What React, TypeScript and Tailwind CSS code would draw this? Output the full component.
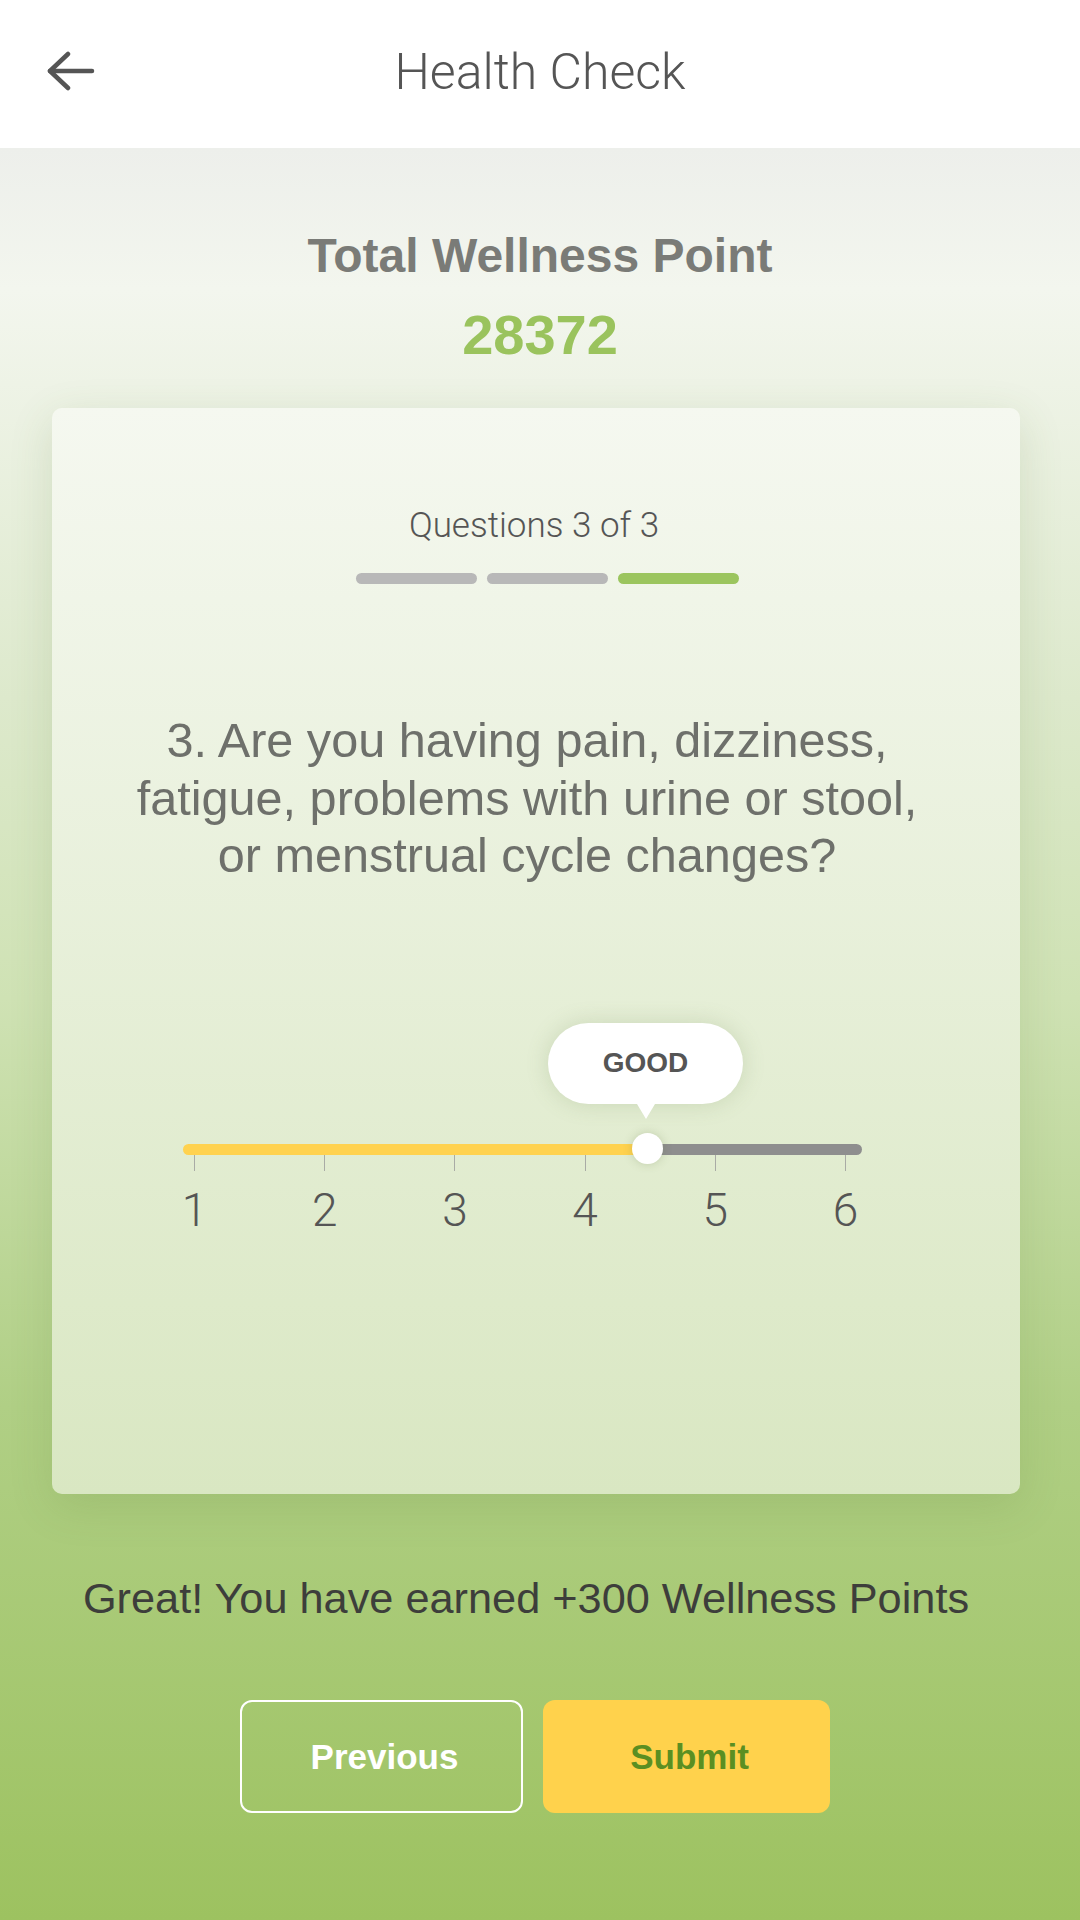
const ticks = [1, 2, 3, 4, 5, 6];

function BackArrow() {
  return (
    <svg width="48" height="40" viewBox="0 0 48 40" fill="none" stroke="#555555" strokeWidth={4.5} strokeLinecap="round" strokeLinejoin="round">
      <path d="M21 3 L3 20 L21 37" />
      <path d="M3 20 H45" />
    </svg>
  );
}

function RatingSlider() {
  return (
    <div className="relative ml-[131px] w-[679px] pt-[121px]">
      {/* tooltip */}
      <div className="absolute left-[365px] top-0 flex h-[81px] w-[195px] items-center justify-center rounded-full bg-white shadow-[0_0_22px_rgba(110,135,80,0.22)]">
        <span className="text-[28px] font-bold leading-none text-[#555555]">GOOD</span>
        <div className="absolute left-1/2 top-full h-0 w-0 -translate-x-1/2 border-l-[9px] border-r-[9px] border-t-[15px] border-l-transparent border-r-transparent border-t-white" />
      </div>

      {/* track */}
      <div className="h-[11px] rounded-full bg-[linear-gradient(to_right,#ffd24f_68.5%,#8e8e8e_68.5%)]" />
      <div className="absolute left-[449px] top-[110px] h-[31px] w-[31px] rounded-full bg-white shadow-[0_0_10px_rgba(90,110,60,0.25)]" />

      {/* ticks + labels */}
      <div className="flex justify-between pl-[11px] pr-[16px]">
        {ticks.map((n) => (
          <div key={n} className="flex w-px flex-col items-center">
            <div className="h-[16px] w-px bg-[#a9aba5]" />
            <span className="mt-[16px] font-['Roboto',sans-serif] text-[46px] font-light leading-none text-[#555555]">
              {n}
            </span>
          </div>
        ))}
      </div>
    </div>
  );
}

export default function App() {
  return (
    <div className="flex h-[1920px] w-[1080px] flex-col font-['Liberation_Sans',Arial,sans-serif]">
      {/* Header */}
      <header className="grid h-[148px] grid-cols-[140px_1fr_140px] bg-white pt-[47px]">
        <div className="pl-[47px] pt-[4px]">
          <BackArrow />
        </div>
        <h1 className="text-center font-['Roboto',sans-serif] text-[50px] font-light leading-none text-[#555555]">
          Health Check
        </h1>
        <div />
      </header>

      {/* Body */}
      <main className="flex flex-1 flex-col bg-[linear-gradient(to_bottom,#edefeb_0%,#f3f6ee_8%,#dde9cc_31%,#cfe2b4_48%,#b0cf85_71%,#9dc260_100%)]">
        <h2 className="pt-[84px] text-center text-[48px] font-bold leading-none text-[#7a7b77]">
          Total Wellness Point
        </h2>
        <p className="mt-[27px] text-center text-[56px] font-bold leading-none text-[#9ac35d]">28372</p>

        {/* Question card */}
        <div className="ml-[52px] mt-[45px] h-[1086px] w-[968px] rounded-[10px] bg-[linear-gradient(to_bottom,#f5f8f0,#d9e7c2)] pt-[100px] text-center shadow-[0_12px_44px_rgba(90,120,50,0.16)]">
          <p className="pr-[4px] font-['Roboto',sans-serif] text-[35px] font-light leading-none text-[#555555]">
            Questions 3 of 3
          </p>
          <div className="mt-[30px] flex justify-center gap-[10px] pl-[22px]">
            <div className="h-[11px] w-[121px] rounded-full bg-[#b8b8b8]" />
            <div className="h-[11px] w-[121px] rounded-full bg-[#b8b8b8]" />
            <div className="h-[11px] w-[121px] rounded-full bg-[#9bc55e]" />
          </div>

          <p className="mt-[128px] pr-[18px] text-[48.6px] leading-[57.5px] text-[#6e706b]">
            3. Are you having pain, dizziness,
            <br />
            fatigue, problems with urine or stool,
            <br />
            or menstrual cycle changes?
          </p>

          <div className="mt-[138px] text-left">
            <RatingSlider />
          </div>
        </div>

        <p className="mt-[83px] pr-[28px] text-center text-[43.3px] leading-none text-[#3d3e3b]">
          Great! You have earned +300 Wellness Points
        </p>

        <div className="mt-[80px] flex justify-center gap-[20px] pr-[10px]">
          <button className="h-[113px] w-[283px] rounded-[12px] border-2 border-white pl-[6px] text-[35px] font-bold text-white">
            Previous
          </button>
          <button className="h-[113px] w-[287px] rounded-[12px] bg-[#ffd24c] pl-[6px] text-[35px] font-bold text-[#5b8f22]">
            Submit
          </button>
        </div>
      </main>
    </div>
  );
}
